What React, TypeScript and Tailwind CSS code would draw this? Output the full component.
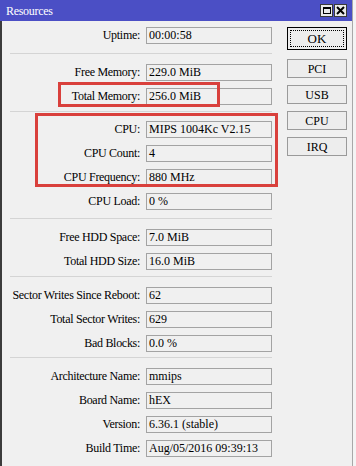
type Row = { label: string; value: string };

const groups: { rows: Row[]; sep: string }[] = [
  { rows: [{ label: 'Uptime', value: '00:00:58' }], sep: '' },
  {
    rows: [
      { label: 'Free Memory', value: '229.0 MiB' },
      { label: 'Total Memory', value: '256.0 MiB' },
    ],
    sep: 'h-[13px] pt-[6px]',
  },
  {
    rows: [
      { label: 'CPU', value: 'MIPS 1004Kc V2.15' },
      { label: 'CPU Count', value: '4' },
      { label: 'CPU Frequency', value: '880 MHz' },
      { label: 'CPU Load', value: '0 %' },
    ],
    sep: 'h-[9px] pt-[3px]',
  },
  {
    rows: [
      { label: 'Free HDD Space', value: '7.0 MiB' },
      { label: 'Total HDD Size', value: '16.0 MiB' },
    ],
    sep: 'h-[12px] pt-[5px]',
  },
  {
    rows: [
      { label: 'Sector Writes Since Reboot', value: '62' },
      { label: 'Total Sector Writes', value: '629' },
      { label: 'Bad Blocks', value: '0.0 %' },
    ],
    sep: 'h-[10px] pt-[3px]',
  },
  {
    rows: [
      { label: 'Architecture Name', value: 'mmips' },
      { label: 'Board Name', value: 'hEX' },
      { label: 'Version', value: '6.36.1 (stable)' },
      { label: 'Build Time', value: 'Aug/05/2016 09:39:13' },
    ],
    sep: 'h-[9px] pt-[2px]',
  },
];

function Field({ label, value }: Row) {
  return (
    <div className="flex items-center h-[24px]">
      <div className="w-[144px] text-right text-[12px] tracking-[-0.3px] text-black pr-[6px] whitespace-nowrap">
        {label}:
      </div>
      <div className="w-[126px] h-[17px] border border-[#a3a3a3] bg-[#f0f0f0] flex items-center pl-[2px] text-[12px] text-black whitespace-nowrap overflow-hidden">
        {value}
      </div>
    </div>
  );
}

function SideButton({ label }: { label: string }) {
  return (
    <div className="w-[60px] h-[19px] border border-[#9a9a9a] bg-[#ededed] flex items-center justify-center text-[12px] text-black">
      {label}
    </div>
  );
}

export default function App() {
  return (
    <div className="relative w-[356px] h-[466px] bg-[#f4f4f4] overflow-hidden font-['Liberation_Serif','Times_New_Roman',serif]">
      <div className="w-[353px] h-full flex flex-col border-r border-[#a8a8a8]">
        {/* title bar */}
        <div className="h-[21px] bg-[#4b4fc5] flex items-center justify-between pl-[6px] pr-[5px]">
          <span className="text-white text-[12px] tracking-[-0.3px]">Resources</span>
          <div className="flex gap-[1px]">
            <div className="w-[13px] h-[13px] bg-[#e9e9e9] border border-[#3a3a3a] flex items-center justify-center">
              <div className="w-[8px] h-[7px] border border-black border-t-2" />
            </div>
            <div className="w-[13px] h-[13px] bg-[#e9e9e9] border border-[#3a3a3a] flex items-center justify-center">
              <svg width="9" height="9" viewBox="0 0 9 9">
                <path d="M1 1 L8 8 M8 1 L1 8" stroke="#000" strokeWidth="2" />
              </svg>
            </div>
          </div>
        </div>

        {/* body */}
        <div className="flex-1 flex bg-[#f0f0f0] border-l-2 border-[#3c3c3c]">
          <div className="w-[285px] pt-[2px] flex flex-col">
            {groups.map((g, i) => (
              <div key={i}>
                {g.sep && (
                  <div className={g.sep}>
                    <div className="ml-[8px] w-[262px] border-t border-[#d4d4d4]" />
                  </div>
                )}
                {g.rows.map((r) => (
                  <Field key={r.label} {...r} />
                ))}
              </div>
            ))}
          </div>

          <div className="pt-[6px] flex flex-col">
            <div className="w-[60px] h-[23px] border border-black bg-[#ededed] p-[2px]">
              <div className="w-full h-full border border-dotted border-black flex items-center justify-center text-[13px] text-black">
                OK
              </div>
            </div>
            <div className="mt-[9px] flex flex-col gap-[7px]">
              <SideButton label="PCI" />
              <SideButton label="USB" />
              <SideButton label="CPU" />
              <SideButton label="IRQ" />
            </div>
          </div>
        </div>
      </div>

      {/* red highlight annotations */}
      <div className="absolute left-[58px] top-[82px] w-[162px] h-[25px] border-[3px] border-[#d9403c]" />
      <div className="absolute left-[35px] top-[113px] w-[243px] h-[74px] border-[3px] border-[#d9403c]" />
    </div>
  );
}
